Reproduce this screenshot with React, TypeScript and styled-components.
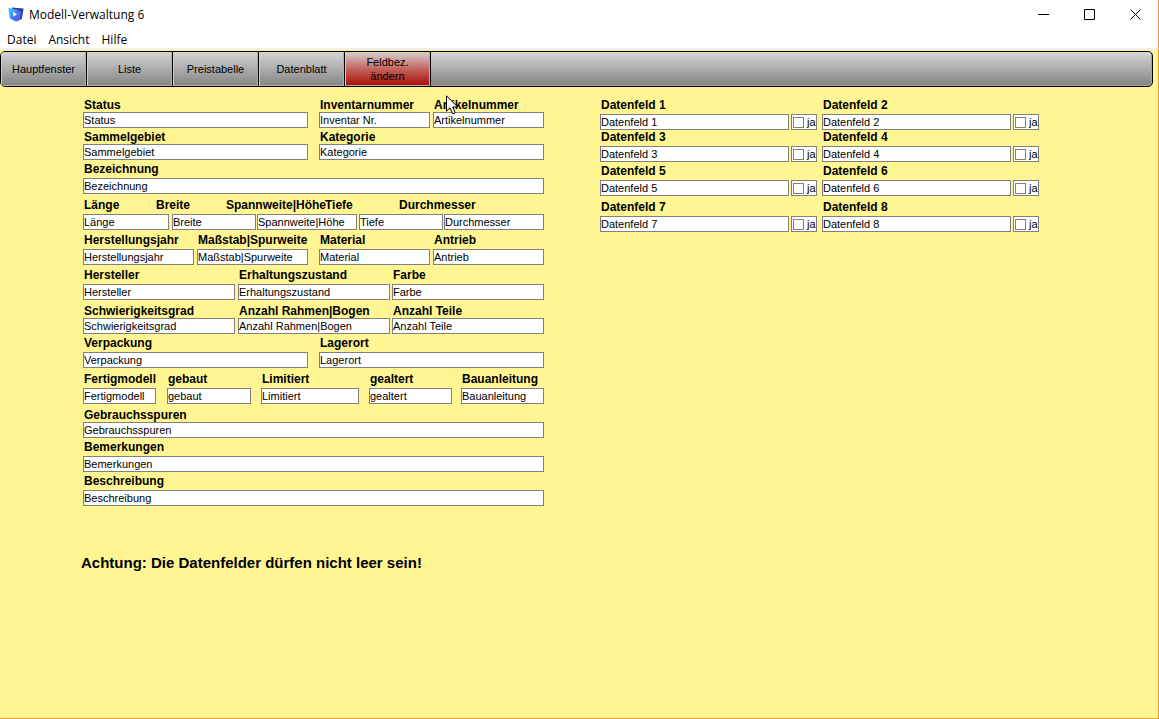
import React from 'react';
import styled, { createGlobalStyle, css } from 'styled-components';

const GlobalStyle = createGlobalStyle`
  *, *::before, *::after { box-sizing: border-box; }
  body {
    margin: 0;
    background: #fff693;
    color: #000;
    font-family: "Liberation Sans", Arial, sans-serif;
    font-size: 11px;
  }
  button, input { font: inherit; color: inherit; }
`;

const Window = styled.div`
  display: flex;
  flex-direction: column;
  min-height: 100vh;
  border: solid #e8a23c;
  border-width: 0 1px 1px 0;
`;

const Chrome = styled.header`
  background: #fff;
  border-bottom: 2px solid #f0f0f0;
  font-family: "Open Sans", "Noto Sans", sans-serif;
  font-size: 12px;
`;

const TitleBar = styled.div`
  display: flex;
  align-items: center;
  height: 29px;
  padding-left: 8px;
`;

const Title = styled.h1`
  flex: 1;
  margin: 0 0 0 5px;
  font-size: 12px;
  font-weight: 400;
  line-height: 16px;
`;

const WindowButton = styled.button`
  display: flex;
  align-items: center;
  justify-content: center;
  width: 46px;
  height: 29px;
  padding: 0;
  border: 0;
  background: none;
`;

const MenuBar = styled.nav`
  display: flex;
  height: 19px;
  gap: 12px;
  padding-left: 7px;
`;

const MenuLink = styled.a`
  color: #000;
  line-height: 22px;
  text-decoration: none;
`;

const Toolbar = styled.nav`
  display: flex;
  height: 36px;
  margin: 1px 5px 0 0;
  overflow: hidden;
  border: 1px solid #000;
  border-radius: 5px;
  background: linear-gradient(#d6d6d6, #828282);
  box-shadow: inset -1px -1px 0 #a6a6a6;
`;

const ToolButton = styled.button<{ $active?: boolean }>`
  width: 86px;
  padding: 0 16px;
  border: 0;
  border-right: 1px solid #000;
  background: linear-gradient(#d4d4d4, #848484);
  box-shadow: inset 1px 0 0 #d0d0d0, inset -1px -1px 0 #b0b0b0;
  line-height: 14px;
  white-space: nowrap;
  display: flex;
  align-items: center;
  justify-content: center;

  ${(p) =>
    p.$active &&
    css`
      background: linear-gradient(#d8d0d0, #c05a54 55%, #a80c04);
      white-space: normal;
    `}
`;

const Content = styled.main`
  display: grid;
  grid-template-columns: minmax(0, 461fr) minmax(0, 439fr);
  column-gap: 56px;
  align-items: start;
  padding: 11px 119px 0 83px;
`;

const Fields = styled.form`
  display: flex;
  flex-direction: column;
`;

const Row = styled.div<{ $cols: string; $space: number; $gap: number }>`
  display: grid;
  grid-template-columns: ${(p) => p.$cols};
  row-gap: ${(p) => p.$gap}px;
  padding-top: ${(p) => p.$space}px;
`;

const Stack = styled.div<{ $space: number; $gap: number }>`
  display: flex;
  flex-direction: column;
  gap: ${(p) => p.$gap}px;
  padding-top: ${(p) => p.$space}px;
`;

const Line = styled.div<{ $cols: string }>`
  display: grid;
  grid-template-columns: ${(p) => p.$cols};
`;

const Cell = styled.div<{ $gap: number }>`
  display: flex;
  flex-direction: column;
  gap: ${(p) => p.$gap}px;
  min-width: 0;
`;

const Label = styled.label`
  position: relative;
  height: 14px;
  padding-left: 1px;
  font-size: 12px;
  font-weight: 700;
  line-height: 14px;
  white-space: nowrap;
`;

const TextInput = styled.input`
  width: 100%;
  min-width: 0;
  height: 16px;
  padding: 0;
  border: 1px solid #808080;
  border-radius: 0;
  background: #fff;
  line-height: 14px;
  outline: none;
`;

const DataGrid = styled.form`
  display: grid;
  grid-template-columns: 1fr 1fr;
  column-gap: 5px;
`;

const DataCell = styled.div<{ $space: number }>`
  display: grid;
  grid-template-columns: minmax(0, 1fr) 26px;
  gap: 2px;
  padding-top: ${(p) => p.$space}px;

  ${Label} { grid-column: 1 / -1; }
`;

const CheckLabel = styled.label`
  display: flex;
  align-items: center;
  gap: 3px;
  height: 16px;
  padding-left: 1px;
  border: 1px solid #808080;
  background: #fff;
  line-height: 14px;
`;

const CheckBox = styled.input`
  appearance: none;
  flex: none;
  width: 11px;
  height: 11px;
  margin: 0;
  border: 1px solid #808080;
  background: #fff;

  &:checked { background: #808080; }
`;

const Warning = styled.p`
  margin: 48px 0 0 -2px;
  font-size: 15px;
  font-weight: 700;
  line-height: 18px;
  white-space: nowrap;
`;

const Pointer = styled.svg`
  position: absolute;
  top: -3px;
  left: 13px;
  z-index: 1;
  pointer-events: none;
`;

type FieldDef = { name: string; value?: string; pointer?: boolean };
type RowDef = {
  space: number;
  gap: number;
  widths: number[];
  gutters?: number[];
  labelWidths?: number[];
  fields: FieldDef[];
};

const f = (...names: string[]): FieldDef[] => names.map((name) => ({ name }));

const rows: RowDef[] = [
  {
    space: 0,
    gap: 0,
    widths: [225, 111, 111],
    gutters: [11, 3],
    fields: [
      { name: 'Status' },
      { name: 'Inventarnummer', value: 'Inventar Nr.' },
      { name: 'Artikelnummer', pointer: true },
    ],
  },
  { space: 2, gap: 0, widths: [225, 225], gutters: [11], fields: f('Sammelgebiet', 'Kategorie') },
  { space: 2, gap: 2, widths: [461], fields: f('Bezeichnung') },
  {
    space: 4,
    gap: 2,
    widths: [86, 84, 100, 84, 100],
    gutters: [3, 1, 2, 1],
    labelWidths: [72, 70, 99, 74, 146],
    fields: f('Länge', 'Breite', 'Spannweite|Höhe', 'Tiefe', 'Durchmesser'),
  },
  {
    space: 3,
    gap: 2,
    widths: [111, 111, 111, 111],
    gutters: [3, 11, 3],
    fields: f('Herstellungsjahr', 'Maßstab|Spurweite', 'Material', 'Antrieb'),
  },
  {
    space: 3,
    gap: 2,
    widths: [152, 152, 152],
    gutters: [3, 2],
    fields: f('Hersteller', 'Erhaltungszustand', 'Farbe'),
  },
  {
    space: 4,
    gap: 0,
    widths: [152, 152, 152],
    gutters: [3, 2],
    fields: f('Schwierigkeitsgrad', 'Anzahl Rahmen|Bogen', 'Anzahl Teile'),
  },
  { space: 2, gap: 2, widths: [225, 225], gutters: [11], fields: f('Verpackung', 'Lagerort') },
  {
    space: 4,
    gap: 2,
    widths: [73, 84, 98, 83, 83],
    gutters: [11, 10, 10, 9],
    fields: f('Fertigmodell', 'gebaut', 'Limitiert', 'gealtert', 'Bauanleitung'),
  },
  { space: 4, gap: 0, widths: [461], fields: f('Gebrauchsspuren') },
  { space: 2, gap: 2, widths: [461], fields: f('Bemerkungen') },
  { space: 2, gap: 2, widths: [461], fields: f('Beschreibung') },
];

const dataSpaces = [0, 0, 2, 4];

const fr = (n: number) => `minmax(0, ${n}fr)`;

/* Interleaves the flexible field tracks with the fixed gutters between them. */
const tracks = (widths: number[], gutters: number[] = []) =>
  widths.map((w, i) => (i < gutters.length ? `${fr(w)} ${gutters[i]}px` : fr(w))).join(' ');

const Arrow = () => (
  <Pointer width="13" height="20" viewBox="0 0 13 20" aria-hidden="true">
    <path
      d="M.5.8V16.2L4 12.8 6.6 18.8 9.2 17.7 6.7 11.9H11.6Z"
      fill="#fff"
      stroke="#000"
      strokeWidth="1"
    />
  </Pointer>
);

const AppLogo = () => (
  <svg width="16" height="16" viewBox="0 0 16 16" aria-hidden="true">
    <defs>
      <linearGradient id="logoFront" x1="0" y1="0" x2="1" y2="1">
        <stop offset="0" stopColor="#45dcfa" />
        <stop offset="0.5" stopColor="#3a80f4" />
        <stop offset="1" stopColor="#6a48e8" />
      </linearGradient>
    </defs>
    <path d="M3.8 .4 15.6 1.4 13.8 12 8 14.6Z" fill="#343cae" />
    <path d="M.2 .8 9.2 2.8 13.4 5 11.6 12.6 7.8 14.6 2 11.2Z" fill="url(#logoFront)" />
    <path d="M4.8 4.6 9 7.2 5.6 9.8Z" fill="#eefaff" />
  </svg>
);

const FormRow = ({ row }: { row: RowDef }) => {
  const cols = tracks(row.widths, row.gutters);
  if (row.labelWidths) {
    return (
      <Stack $space={row.space} $gap={row.gap}>
        <Line $cols={tracks(row.labelWidths)}>
          {row.fields.map((d) => (
            <Label key={d.name} htmlFor={d.name}>{d.name}</Label>
          ))}
        </Line>
        <Line $cols={cols}>
          {row.fields.map((d, i) => (
            <TextInput
              key={d.name}
              id={d.name}
              defaultValue={d.name}
              style={{ gridColumn: i * 2 + 1 }}
            />
          ))}
        </Line>
      </Stack>
    );
  }
  return (
    <Row $cols={cols} $space={row.space} $gap={row.gap}>
      {row.fields.map((d, i) => (
        <Cell key={d.name} $gap={row.gap} style={{ gridColumn: i * 2 + 1 }}>
          <Label htmlFor={d.name}>
            {d.name}
            {d.pointer && <Arrow />}
          </Label>
          <TextInput id={d.name} defaultValue={d.value ?? d.name} />
        </Cell>
      ))}
    </Row>
  );
};

export default function App() {
  return (
    <>
      <GlobalStyle />
      <Window>
        <Chrome>
          <TitleBar>
            <AppLogo />
            <Title>Modell-Verwaltung 6</Title>
            <WindowButton aria-label="Minimieren">
              <svg width="11" height="11"><path d="M0 5.5H11" stroke="#000" /></svg>
            </WindowButton>
            <WindowButton aria-label="Maximieren">
              <svg width="11" height="11"><path d="M.5 .5H10.5V10.5H.5Z" fill="none" stroke="#000" /></svg>
            </WindowButton>
            <WindowButton aria-label="Schließen">
              <svg width="11" height="11"><path d="M.5 .5 10.5 10.5M10.5 .5 .5 10.5" stroke="#000" /></svg>
            </WindowButton>
          </TitleBar>
          <MenuBar>
            <MenuLink href="#datei">Datei</MenuLink>
            <MenuLink href="#ansicht">Ansicht</MenuLink>
            <MenuLink href="#hilfe">Hilfe</MenuLink>
          </MenuBar>
        </Chrome>
        <Toolbar>
          <ToolButton>Hauptfenster</ToolButton>
          <ToolButton>Liste</ToolButton>
          <ToolButton>Preistabelle</ToolButton>
          <ToolButton>Datenblatt</ToolButton>
          <ToolButton $active>Feldbez. ändern</ToolButton>
        </Toolbar>
        <Content>
          <Fields>
            {rows.map((row) => (
              <FormRow key={row.fields[0].name} row={row} />
            ))}
            <Warning>Achtung: Die Datenfelder dürfen nicht leer sein!</Warning>
          </Fields>
          <DataGrid>
            {[1, 2, 3, 4, 5, 6, 7, 8].map((n) => (
              <DataCell key={n} $space={dataSpaces[Math.floor((n - 1) / 2)]}>
                <Label htmlFor={`datenfeld${n}`}>Datenfeld {n}</Label>
                <TextInput id={`datenfeld${n}`} defaultValue={`Datenfeld ${n}`} />
                <CheckLabel>
                  <CheckBox type="checkbox" />
                  ja
                </CheckLabel>
              </DataCell>
            ))}
          </DataGrid>
        </Content>
      </Window>
    </>
  );
}
